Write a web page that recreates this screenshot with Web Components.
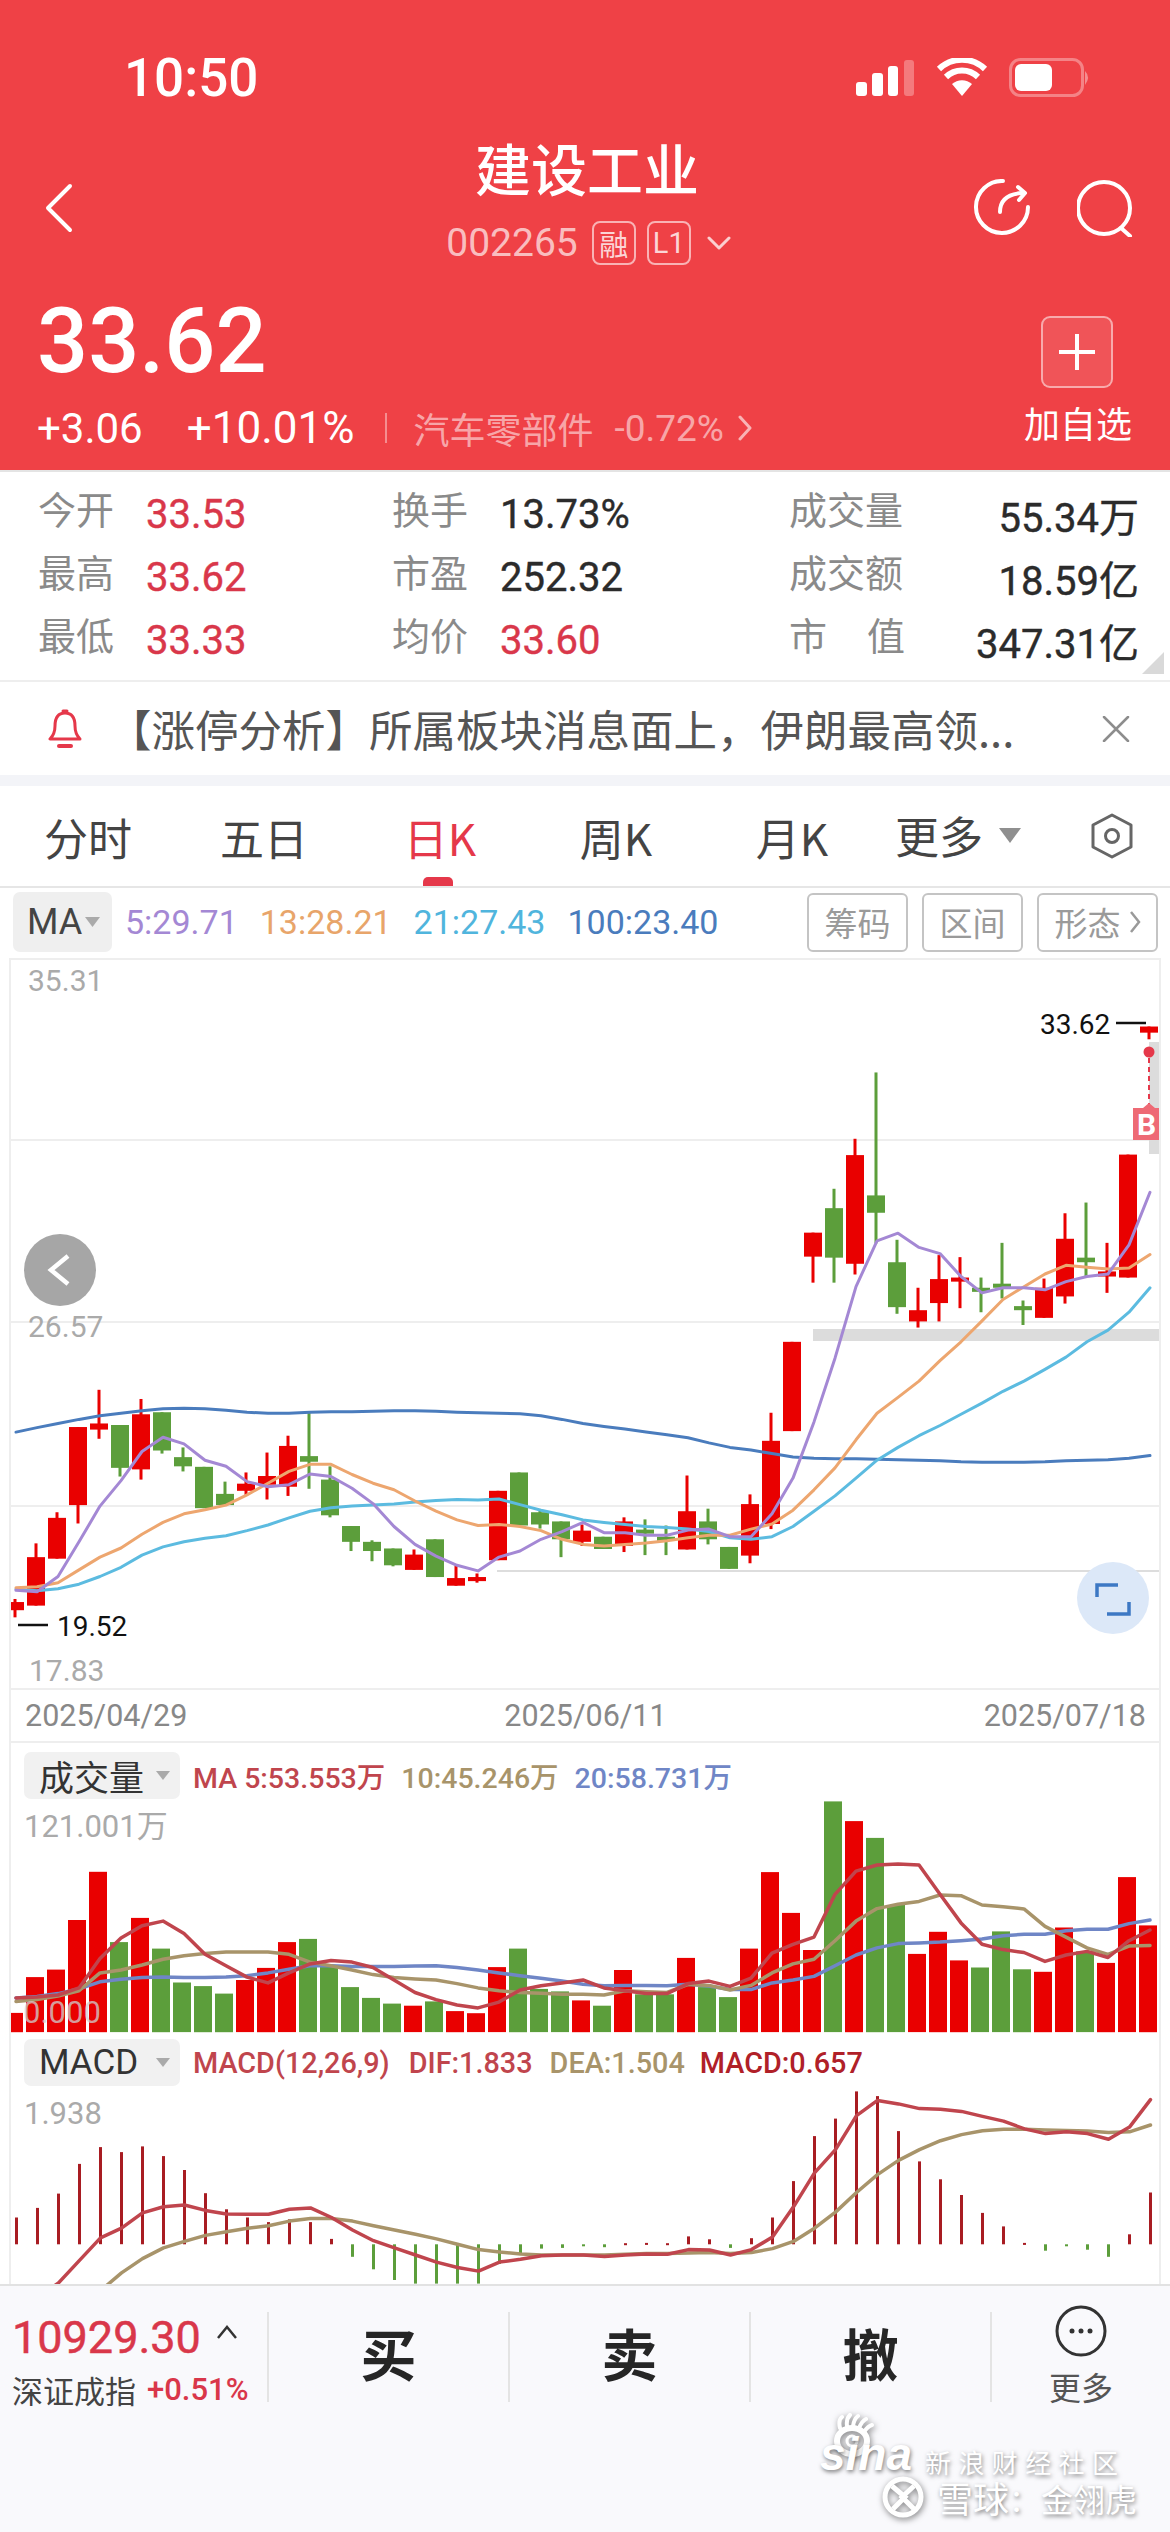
<!DOCTYPE html>
<html lang="zh-CN">
<head>
<meta charset="utf-8">
<title>建设工业</title>
<style>
  html, body { margin: 0; padding: 0; background: #fff; }
  body {
    width: 1170px;
    height: 2532px;
    overflow: hidden;
    display: flex;
    flex-direction: column;
    font-family: Roboto, "Noto Sans CJK SC", sans-serif;
  }
</style>
</head>
<body>
  <stock-header></stock-header>
  <stat-grid>
    <stat-cell label="今开" value="33.53" tone="up"></stat-cell>
    <stat-cell label="换手" value="13.73%"></stat-cell>
    <stat-cell label="成交量" value="55.34万" wide></stat-cell>
    <stat-cell label="最高" value="33.62" tone="up"></stat-cell>
    <stat-cell label="市盈" value="252.32"></stat-cell>
    <stat-cell label="成交额" value="18.59亿" wide></stat-cell>
    <stat-cell label="最低" value="33.33" tone="up"></stat-cell>
    <stat-cell label="均价" value="33.60" tone="up"></stat-cell>
    <stat-cell label="市值" value="347.31亿" wide></stat-cell>
  </stat-grid>
  <news-bar>【涨停分析】所属板块消息面上，伊朗最高领...</news-bar>
  <period-tabs>
    <period-tab>分时</period-tab>
    <period-tab>五日</period-tab>
    <period-tab active>日K</period-tab>
    <period-tab>周K</period-tab>
    <period-tab>月K</period-tab>
  </period-tabs>
  <ma-bar></ma-bar>
  <kline-chart></kline-chart>
  <volume-panel></volume-panel>
  <macd-panel></macd-panel>
  <trade-bar></trade-bar>

<script>
// chart data is read off the screenshot, one value per trading day
const RED = "#e90000";
const GREEN = "#5c9e3b";
const kY = (z) => 950 + z / 1.96;
const subY = (z) => 1730 + z / 2.8;

const polyline = (vals, toY, base, color, width = 3) => {
    const pts = vals.map((v, i) => `${(base + 21 * i).toFixed(1)},${toY(v).toFixed(1)}`).join(" ");
    return `<polyline points="${pts}" fill="none" stroke="${color}" stroke-width="${width}" stroke-linejoin="round" stroke-linecap="round"/>`;
};

const CANDLES = [
    ["r",1272,1278,1294,1308],["r",1163,1190,1285,1285],["r",1102,1113,1193,1193],["r",935,935,1088,1124],
    ["r",862,928,940,958],["g",931,931,1015,1032],["r",880,910,1018,1038],["g",906,906,981,987],
    ["g",975,994,1012,1022],["g",1013,1013,1094,1094],["g",1042,1066,1088,1088],["r",1024,1046,1060,1068],
    ["r",985,1031,1048,1077],["r",952,972,1052,1070],["g",907,992,1003,1056],["g",1012,1038,1108,1112],
    ["g",1129,1129,1160,1178],["g",1157,1160,1178,1198],["g",1173,1173,1206,1208],["r",1175,1185,1215,1215],
    ["g",1155,1155,1229,1229],["r",1207,1231,1246,1246],["r",1222,1229,1237,1240],["r",1060,1060,1196,1196],
    ["g",1024,1024,1128,1128],["g",1097,1102,1126,1134],["g",1120,1120,1155,1190],["r",1126,1138,1160,1168],
    ["g",1150,1150,1174,1174],["r",1112,1120,1168,1180],["g",1116,1136,1144,1186],["g",1128,1150,1158,1186],
    ["r",1030,1100,1175,1175],["g",1095,1120,1155,1165],["g",1170,1170,1213,1213],["r",1067,1086,1187,1202],
    ["r",907,962,1125,1135],["r",768,768,943,943],["r",554,554,601,652],["g",468,506,603,652],
    ["r",370,402,615,636],["g",240,481,515,575],["g",568,612,700,713],["r",662,706,728,740],
    ["r",598,645,692,728],["r",602,642,650,702],["g",642,662,670,710],["g",574,654,662,683],
    ["g",687,698,706,735],["r",644,662,721,721],["r",516,566,679,693],["g",495,603,612,640],
    ["r",574,630,640,672],["r",401,401,642,642],["r",150,150,162,175]
];
const K_MA5 = [1255,1258,1228,1160,1090,1040,983,955,968,1000,1012,1042,1052,1048,1027,1032,1055,1085,1130,1165,1188,1206,1217,1190,1178,1155,1140,1122,1142,1142,1147,1147,1137,1135,1150,1150,1105,1035,925,800,660,570,555,583,595,640,672,662,662,666,650,640,635,578,475];
const K_MA13 = [1250,1248,1240,1215,1190,1172,1145,1122,1105,1097,1088,1068,1045,1022,1008,1008,1028,1045,1058,1080,1100,1117,1128,1126,1130,1138,1155,1165,1168,1165,1162,1158,1152,1147,1147,1135,1125,1098,1058,1015,960,908,877,845,805,768,727,685,660,635,618,622,625,623,597];
const K_MA21 = [1253,1256,1252,1243,1228,1210,1186,1170,1160,1153,1148,1138,1127,1113,1100,1093,1090,1088,1086,1082,1079,1077,1078,1076,1087,1098,1107,1117,1122,1126,1130,1132,1135,1140,1152,1155,1150,1130,1100,1070,1035,1000,975,952,932,910,888,865,845,822,798,768,745,710,662];
const K_MA100 = [945,936,928,920,913,908,903,899,898,899,902,906,908,908,906,905,905,904,903,903,904,906,907,908,909,913,920,928,934,939,945,950,956,966,975,980,987,994,996,997,997,998,999,1000,1001,1003,1004,1004,1004,1003,1001,1000,999,996,991];

const VOLUME = [
    ["r",792],["r",692],["r",671],["r",532],["r",397],["g",594],["r",526],["g",612],["g",707],["g",717],["g",738],
    ["r",700],["r",666],["r",594],["g",585],["g",660],["g",720],["g",750],["g",766],["r",772],["g",760],["r",787],
    ["r",793],["r",664],["g",612],["g",725],["g",732],["r",757],["g",772],["r",672],["g",740],["g",740],["r",638],
    ["g",720],["g",748],["r",612],["r",398],["r",512],["r",616],["g",200],["r",255],["g",302],["g",490],["r",627],
    ["r",565],["r",645],["g",665],["g",564],["g",670],["r",677],["r",553],["g",620],["r",652],["r",412],["r",547]
];
const V_MA5 = [750,748,742,722,640,582,548,535,570,628,660,692,708,680,655,645,650,665,700,735,755,770,778,762,728,716,708,700,722,730,738,738,710,703,718,695,625,600,580,460,395,378,375,378,460,540,600,615,623,648,630,620,637,590,560];
const V_MA10 = [760,755,745,730,680,672,658,642,632,626,622,622,622,628,650,660,672,685,693,697,700,710,722,730,735,737,740,740,742,730,733,735,712,715,728,715,680,655,642,590,535,500,488,480,462,464,490,495,501,550,580,610,628,605,603];
const V_MA20 = [750,746,738,725,705,698,693,692,693,693,692,688,680,670,660,660,662,662,662,661,660,665,672,680,688,695,703,712,716,715,715,716,712,717,727,727,708,700,690,660,630,610,598,596,594,590,585,576,572,572,562,558,558,542,532];

const MACD_BARS = [1365,1338,1298,1215,1168,1182,1166,1193,1232,1297,1342,1365,1378,1370,1378,1425,1475,1510,1540,1550,1550,1550,1550,1495,1470,1452,1450,1443,1448,1437,1436,1437,1418,1426,1450,1423,1365,1263,1137,1088,1012,1025,1123,1208,1258,1302,1352,1390,1436,1458,1442,1455,1475,1412,1295];
const DIF = [1640,1590,1548,1485,1422,1395,1352,1335,1330,1345,1355,1356,1356,1342,1338,1365,1400,1430,1450,1470,1490,1505,1515,1490,1482,1472,1470,1470,1474,1470,1467,1468,1455,1456,1470,1455,1420,1335,1240,1175,1080,1037,1047,1060,1062,1068,1082,1095,1117,1130,1125,1130,1146,1112,1035];
const DEA = [1800,1740,1680,1620,1570,1520,1480,1450,1432,1415,1405,1395,1388,1375,1368,1368,1375,1388,1400,1412,1425,1440,1455,1462,1467,1470,1470,1470,1470,1468,1466,1466,1464,1463,1466,1463,1452,1432,1395,1350,1295,1245,1205,1175,1150,1133,1122,1118,1118,1120,1121,1123,1127,1125,1106];

class StatusBar extends HTMLElement {
    constructor() {
        super();
        this.attachShadow({ mode: "open" }).innerHTML = `
            <style>
                :host {
                    display: flex;
                    justify-content: space-between;
                    align-items: center;
                    padding: 58px 79px 0 124px;
                    height: 40px;
                    color: #fff;
                }
                .time { font: 500 53px/40px Roboto, sans-serif; }
                svg { display: block; }
            </style>
            <span class="time">10:50</span>
            <svg width="235" height="40" viewBox="856 58 235 40">
                <g fill="#fff">
                    <rect x="856" y="82" width="11" height="14" rx="3"/>
                    <rect x="872" y="73" width="11" height="23" rx="3"/>
                    <rect x="888" y="66" width="10" height="30" rx="3"/>
                    <rect x="904" y="60" width="10" height="36" rx="3" opacity=".3"/>
                    <path d="M962 96 L952 84 A15 15 0 0 1 972 84 Z"/>
                </g>
                <g fill="none" stroke="#fff" stroke-width="6">
                    <path d="M946 77 A23 23 0 0 1 978 77"/>
                    <path d="M939 69 A33 33 0 0 1 985 69"/>
                </g>
                <rect x="1010.5" y="59.5" width="72" height="36" rx="10" fill="none" stroke="#fff" stroke-opacity=".35" stroke-width="3"/>
                <rect x="1015" y="64" width="37" height="27" rx="6" fill="#fff"/>
                <path d="M1085 71 Q1091 77 1085 85 Z" fill="#fff" fill-opacity=".4"/>
            </svg>
        `;
    }
}

class StockHeader extends HTMLElement {
    constructor() {
        super();
        this.attachShadow({ mode: "open" }).innerHTML = `
            <style>
                :host {
                    display: block;
                    height: 470px;
                    box-sizing: border-box;
                    background: #ef4146;
                    color: #fff;
                    font-family: Roboto, "Noto Sans CJK SC", sans-serif;
                }
                svg { display: block; }
                .nav {
                    display: grid;
                    grid-template-columns: 1fr auto 1fr;
                    align-items: center;
                    height: 135px;
                    padding: 38px 37px 0 45px;
                }
                .title { text-align: center; }
                .name { font-size: 56px; line-height: 60px; font-weight: 500; margin-left: -4px; }
                .code {
                    display: flex;
                    align-items: center;
                    height: 44px;
                    margin-top: 19px;
                    margin-left: -1px;
                    color: rgba(255, 255, 255, 0.68);
                    font-size: 39px;
                }
                .tag {
                    box-sizing: border-box;
                    display: flex;
                    align-items: center;
                    justify-content: center;
                    width: 44px;
                    height: 44px;
                    margin-left: 14px;
                    border: 2px solid rgba(255, 255, 255, 0.6);
                    border-radius: 8px;
                    font-size: 29px;
                    color: rgba(255, 255, 255, 0.8);
                }
                .tag + .tag { margin-left: 11px; }
                .actions { display: flex; justify-content: flex-end; gap: 47px; }
                .caret { margin-left: 16px; }
                .quote {
                    display: flex;
                    justify-content: space-between;
                    height: 197px;
                    padding: 23px 40px 0 37px;
                    box-sizing: border-box;
                }
                .price { font-size: 90px; line-height: 90px; font-weight: 500; margin-top: 3px; }
                .change {
                    display: flex;
                    align-items: center;
                    height: 44px;
                    margin-top: 19px;
                    font-size: 42px;
                }
                .pct { margin-left: 44px; font-size: 44px; }
                .rule { width: 2px; height: 30px; background: rgba(255, 255, 255, 0.4); margin: 0 26px 0 31px; }
                .sector { font-size: 36px; color: rgba(255, 255, 255, 0.55); display: flex; align-items: center; }
                .sector b { font-weight: 400; margin-left: 21px; font-size: 37px; }
                .sector svg { margin-left: 14px; }
                .add { display: flex; flex-direction: column; align-items: center; padding-top: 22px; width: 106px; }
                .plus {
                    box-sizing: border-box;
                    width: 72px;
                    height: 72px;
                    display: flex;
                    align-items: center;
                    justify-content: center;
                    border: 2px solid rgba(255, 255, 255, 0.5);
                    border-radius: 9px;
                    background: rgba(255, 255, 255, 0.1);
                }
                .add span { font-size: 36px; line-height: 44px; margin-top: 16px; margin-left: 2px; white-space: nowrap; }
            </style>
            <status-bar></status-bar>
            <div class="nav">
                <svg width="28" height="50" viewBox="0 0 28 50" fill="none" stroke="#fff" stroke-width="4" stroke-linecap="round" stroke-linejoin="round" style="margin-top:8px">
                    <path d="M25 3 L3 25 L25 47"/>
                </svg>
                <div class="title">
                    <div class="name">建设工业</div>
                    <div class="code">
                        <span>002265</span>
                        <span class="tag">融</span>
                        <span class="tag">L1</span>
                        <svg class="caret" width="24" height="16" viewBox="0 0 24 16" fill="none" stroke="rgba(255,255,255,.75)" stroke-width="3" stroke-linecap="round" stroke-linejoin="round">
                            <path d="M2 3 L12 13 L22 3"/>
                        </svg>
                    </div>
                </div>
                <div class="actions" style="margin-top:8px">
                    <svg width="56" height="58" viewBox="974 178 56 58" fill="none" stroke="#fff" stroke-width="4" stroke-linecap="round" stroke-linejoin="round">
                        <path d="M1003 180 A26 26 0 1 0 1028 206"/>
                        <path d="M1000 211 C1000 200 1006 193 1022 192"/>
                        <path d="M1018 186 L1025 192 L1019 199"/>
                    </svg>
                    <svg width="56" height="58" viewBox="1077 178 56 58" fill="none" stroke="#fff" stroke-width="4" stroke-linecap="round">
                        <circle cx="1104" cy="207" r="26"/>
                        <path d="M1121 227 L1130 235"/>
                    </svg>
                </div>
            </div>
            <div class="quote">
                <div>
                    <div class="price">33.62</div>
                    <div class="change">
                        <span>+3.06</span>
                        <span class="pct">+10.01%</span>
                        <span class="rule"></span>
                        <span class="sector">汽车零部件<b>-0.72%</b>
                            <svg width="14" height="28" viewBox="0 0 14 28" fill="none" stroke="rgba(255,255,255,.6)" stroke-width="3" stroke-linecap="round" stroke-linejoin="round"><path d="M2 3 L12 14 L2 25"/></svg>
                        </span>
                    </div>
                </div>
                <div class="add">
                    <div class="plus">
                        <svg width="36" height="36" viewBox="0 0 36 36" stroke="#fff" stroke-width="4"><path d="M18 0 V36 M0 18 H36"/></svg>
                    </div>
                    <span>加自选</span>
                </div>
            </div>
        `;
    }
}

class StatGrid extends HTMLElement {
    constructor() {
        super();
        this.attachShadow({ mode: "open" }).innerHTML = `
            <style>
                :host {
                    display: grid;
                    grid-template-columns: 354px 397px 350px;
                    grid-auto-rows: 63px;
                    position: relative;
                    height: 212px;
                    box-sizing: border-box;
                    padding: 11px 0 0 38px;
                    border-top: 2px solid #e4e4e4;
                    border-bottom: 2px solid #eeeeee;
                }
                .corner {
                    position: absolute;
                    right: 6px;
                    bottom: 6px;
                    width: 0;
                    height: 0;
                    border-left: 22px solid transparent;
                    border-bottom: 22px solid #d9d9d9;
                }
            </style>
            <slot></slot>
            <span class="corner"></span>
        `;
    }
}

class StatCell extends HTMLElement {
    constructor() {
        super();
        this.attachShadow({ mode: "open" });
    }

    connectedCallback() {
        const wide = this.hasAttribute("wide");
        const up = this.getAttribute("tone") === "up";
        const label = this.getAttribute("label");
        // 市值 is spaced out to the width of the three character labels
        const labelHtml = label.length === 2 && wide
            ? `<span class="label spread"><i>${label[0]}</i><i>${label[1]}</i></span>`
            : `<span class="label">${label}</span>`;
        this.shadowRoot.innerHTML = `
            <style>
                :host {
                    display: flex;
                    align-items: center;
                    justify-content: ${wide ? "space-between" : "flex-start"};
                    font-family: Roboto, "Noto Sans CJK SC", sans-serif;
                }
                .label { width: ${wide ? 116 : 108}px; font-size: 38px; line-height: 46px; margin-bottom: 7px; color: #8a8a8a; white-space: nowrap; }
                .spread { display: flex; justify-content: space-between; }
                .spread i { font-style: normal; }
                .value { font-size: 40px; font-weight: 400; -webkit-text-stroke: 0.4px currentColor; color: ${up ? "#d9374a" : "#2b2b2b"}; white-space: nowrap; }
            </style>
            ${labelHtml}
            <span class="value">${this.getAttribute("value")}</span>
        `;
    }
}

class NewsBar extends HTMLElement {
    constructor() {
        super();
        this.attachShadow({ mode: "open" }).innerHTML = `
            <style>
                :host {
                    display: flex;
                    align-items: center;
                    box-sizing: border-box;
                    padding-left: 48px;
                    border-bottom: 11px solid #f3f4f8;
                    height: 104px;
                    color: #555;
                    font: 43.5px "Noto Sans CJK SC", sans-serif;
                }
                .text { flex: 1; margin-left: 26px; white-space: nowrap; line-height: 60px; }
                .close { margin-right: 40px; }
            </style>
            <svg width="34" height="42" viewBox="0 0 34 42" fill="none" stroke="#e5384a" stroke-width="3" stroke-linejoin="round" stroke-linecap="round">
                <path d="M17 5 C9 5 7 11 7 18 C7 24 5 28 2 31 H32 C29 28 27 24 27 18 C27 11 25 5 17 5 Z"/>
                <path d="M15 3 H19"/>
                <path d="M11 38 H23" stroke-width="4"/>
            </svg>
            <span class="text"><slot></slot></span>
            <svg class="close" width="28" height="26" viewBox="0 0 28 26" stroke="#8d8d8d" stroke-width="2.5" stroke-linecap="round">
                <path d="M2 1 L26 25 M26 1 L2 25"/>
            </svg>
        `;
    }
}

class PeriodTab extends HTMLElement {
    constructor() {
        super();
        this.attachShadow({ mode: "open" }).innerHTML = `
            <style>
                :host {
                    display: block;
                    position: relative;
                    height: 100px;
                    box-sizing: border-box;
                    padding-top: 21px;
                    text-align: center;
                    font: 44px/60px "Noto Sans CJK SC", sans-serif;
                    color: #444;
                }
                :host([active]) { color: #e5384a; }
                :host([active])::after {
                    content: "";
                    position: absolute;
                    left: 71px;
                    bottom: 0;
                    width: 30px;
                    height: 9px;
                    border-radius: 5px 5px 0 0;
                    background: #e5384a;
                }
            </style>
            <slot></slot>
        `;
    }
}

class PeriodTabs extends HTMLElement {
    constructor() {
        super();
        this.attachShadow({ mode: "open" }).innerHTML = `
            <style>
                :host {
                    display: grid;
                    grid-template-columns: repeat(5, 176px) 156px 1fr;
                    height: 102px;
                    box-sizing: border-box;
                    border-bottom: 2px solid #e6e6e6;
                    font: 44px/60px "Noto Sans CJK SC", sans-serif;
                    color: #444;
                }
                .more { display: flex; align-items: center; justify-content: center; height: 102px; margin-top: -2px; gap: 16px; }
                .gear { display: flex; align-items: center; justify-content: center; height: 100px; margin-left: 18px; }
            </style>
            <slot></slot>
            <div class="more">
                <span>更多</span>
                <svg width="22" height="15" viewBox="0 0 22 15"><path d="M0 0 H22 L11 15 Z" fill="#8f8f8f"/></svg>
            </div>
            <div class="gear">
                <svg width="44" height="46" viewBox="0 0 44 46" fill="none" stroke="#666" stroke-width="3" stroke-linejoin="round">
                    <path d="M22 2 L41 12 V34 L22 44 L3 34 V12 Z"/>
                    <circle cx="22" cy="23" r="6.5"/>
                </svg>
            </div>
        `;
    }
}

class MaBar extends HTMLElement {
    constructor() {
        super();
        this.attachShadow({ mode: "open" }).innerHTML = `
            <style>
                :host {
                    display: flex;
                    align-items: center;
                    height: 70px;
                    box-sizing: border-box;
                    padding: 3px 12px 5px 13px;
                    font: 34px Roboto, "Noto Sans CJK SC", sans-serif;
                }
                .pill {
                    box-sizing: border-box;
                    display: flex;
                    align-items: center;
                    width: 99px;
                    height: 60px;
                    padding-left: 14px;
                    gap: 3px;
                    border-radius: 7px;
                    background: #efefef;
                    color: #444;
                    font-size: 36px;
                }
                .legend { margin-left: 13px; white-space: nowrap; }
                .legend + .legend { margin-left: 22px; }
                .actions { display: flex; gap: 14px; margin-left: auto; }
                .btn {
                    box-sizing: border-box;
                    display: flex;
                    align-items: center;
                    justify-content: center;
                    gap: 8px;
                    width: 101px;
                    height: 59px;
                    border: 2px solid #c4c4c4;
                    border-radius: 6px;
                    color: #9a9a9a;
                    font-size: 33px;
                }
                .btn.wide { width: 121px; }
            </style>
            <span class="pill">MA<svg width="15" height="10" viewBox="0 0 15 10"><path d="M0 0 H15 L7.5 10 Z" fill="#aaa"/></svg></span>
            <span class="legend" style="color:#a488d4">5:29.71</span>
            <span class="legend" style="color:#e8a56a">13:28.21</span>
            <span class="legend" style="color:#50b5dd">21:27.43</span>
            <span class="legend" style="color:#4a7cbd">100:23.40</span>
            <div class="actions">
                <span class="btn">筹码</span>
                <span class="btn">区间</span>
                <span class="btn wide">形态<svg width="12" height="24" viewBox="0 0 12 24" fill="none" stroke="#9a9a9a" stroke-width="2.5"><path d="M2 2 L10 12 L2 22"/></svg></span>
            </div>
        `;
    }
}

class KlineChart extends HTMLElement {
    constructor() {
        super();
        const grid = [1140, 1322, 1506].map((y) => `<line x1="11" x2="1159" y1="${y}" y2="${y}" stroke="#eeeeee" stroke-width="2"/>`).join("");
        const candles = CANDLES.map(([c, wt, bt, bb, wb], i) => {
            const x = 15 + 21 * i;
            const fill = c === "r" ? RED : GREEN;
            return `<rect x="${x - 1.5}" y="${kY(wt)}" width="3" height="${kY(wb) - kY(wt)}" fill="${fill}"/>` +
                `<rect x="${x - 9}" y="${kY(bt)}" width="18" height="${Math.max(kY(bb) - kY(bt), 3)}" fill="${fill}"/>`;
        }).join("");
        this.attachShadow({ mode: "open" }).innerHTML = `
            <style>
                :host {
                    display: block;
                    box-sizing: border-box;
                    width: 1152px;
                    margin-left: 9px;
                    border: 2px solid #eeeeee;
                    border-width: 2px 2px 0;
                    font-family: Roboto, "Noto Sans CJK SC", sans-serif;
                }
                svg { display: block; }
                text { font-family: Roboto, sans-serif; }
                .axis { font-size: 30px; fill: #aaaaaa; }
                .mark { font-size: 28px; fill: #111; }
                .dates {
                    display: flex;
                    justify-content: space-between;
                    align-items: center;
                    height: 51px;
                    padding: 0 13px 0 14px;
                    border-top: 2px solid #eeeeee;
                    border-bottom: 2px solid #eeeeee;
                    font-size: 30.5px;
                    color: #888;
                }
            </style>
            <svg width="1148" height="728" viewBox="11 960 1148 728">
                ${grid}
                <line x1="497" x2="1159" y1="1571" y2="1571" stroke="#dddddd" stroke-width="2"/>
                <rect x="813" y="1329" width="347" height="12" fill="#dcdcdc"/>
                <rect x="1149" y="1042" width="11" height="112" fill="#dcdcdc"/>
                ${candles}
                ${polyline(K_MA100, kY, 16, "#4a7cbd")}
                ${polyline(K_MA21, kY, 16, "#5cbbe0")}
                ${polyline(K_MA13, kY, 16, "#eda66f")}
                ${polyline(K_MA5, kY, 16, "#a488d4")}
                <text class="axis" x="28" y="991">35.31</text>
                <text class="axis" x="28" y="1337">26.57</text>
                <text class="axis" x="29" y="1681">17.83</text>
                <path d="M18 1625 H48" stroke="#111" stroke-width="2.5"/>
                <text class="mark" x="57" y="1636">19.52</text>
                <text class="mark" x="1040" y="1034">33.62</text>
                <path d="M1116 1023 H1146" stroke="#111" stroke-width="2.5"/>
                <ellipse cx="1149" cy="1052" rx="5.5" ry="5.5" fill="#e5384a"/>
                <path d="M1149 1058 V1104" stroke="#e5384a" stroke-width="2" stroke-dasharray="5 4"/>
                <path d="M1133 1108 H1143 L1149 1103 L1155 1108 H1160 V1140 H1133 Z" fill="#ee6a75"/>
                <text x="1146.5" y="1135" text-anchor="middle" font-size="30" font-weight="700" fill="#fff">B</text>
                <circle cx="60" cy="1270" r="36" fill="#a6a6a6"/>
                <path d="M68 1256 L51 1270 L68 1284" fill="none" stroke="#fff" stroke-width="4.5"/>
                <circle cx="1113" cy="1598" r="36" fill="#dce8f8"/>
                <path d="M1097 1597 V1585 H1118 M1129 1602 V1614 H1107" fill="none" stroke="#3d78c4" stroke-width="3.5"/>
            </svg>
            <div class="dates">
                <span>2025/04/29</span>
                <span>2025/06/11</span>
                <span>2025/07/18</span>
            </div>
        `;
    }
}

// the grey label with a little drop arrow on top of the two lower panels
class PanelPill extends HTMLElement {
    constructor() {
        super();
        this.attachShadow({ mode: "open" }).innerHTML = `
            <style>
                :host {
                    box-sizing: border-box;
                    display: inline-flex;
                    align-items: center;
                    justify-content: space-between;
                    width: 156px;
                    height: 47px;
                    padding: 0 10px 0 15px;
                    border-radius: 7px;
                    background: #f1f1f1;
                    color: #333;
                    font: 35px Roboto, "Noto Sans CJK SC", sans-serif;
                    flex: none;
                }
            </style>
            <slot></slot>
            <svg width="14" height="9" viewBox="0 0 14 9"><path d="M0 0 H14 L7 9 Z" fill="#aaa"/></svg>
        `;
    }
}

class VolumePanel extends HTMLElement {
    constructor() {
        super();
        const bars = VOLUME.map(([c, top], i) => {
            const x = 14 + 21 * i;
            return `<rect x="${x - 9}" y="${subY(top).toFixed(1)}" width="18" height="${(subY(846) - subY(top)).toFixed(1)}" fill="${c === "r" ? RED : GREEN}"/>`;
        }).join("");
        this.attachShadow({ mode: "open" }).innerHTML = `
            <style>
                :host {
                    display: block;
                    box-sizing: border-box;
                    width: 1152px;
                    margin-left: 9px;
                    border: 2px solid #eeeeee;
                    border-width: 0 2px;
                    font-family: Roboto, "Noto Sans CJK SC", sans-serif;
                }
                .head { display: flex; align-items: center; height: 57px; padding-left: 13px; box-sizing: border-box; padding-top: 7px; font-size: 28.5px; white-space: nowrap; }
                .head span { font-weight: 500; }
                .head panel-pill { margin-right: 13px; }
                .head span + span { margin-left: 16px; }
                svg { display: block; }
                text { font-family: Roboto, "Noto Sans CJK SC", sans-serif; }
            </style>
            <div class="head">
                <panel-pill>成交量</panel-pill>
                <span style="color:#c0454d">MA 5:53.553万</span>
                <span style="color:#a8946a">10:45.246万</span>
                <span style="color:#6f86c6">20:58.731万</span>
            </div>
            <svg width="1148" height="233" viewBox="11 1800 1148 233">
                ${bars}
                ${polyline(V_MA20, subY, 16, "#6f86c6", 3.5)}
                ${polyline(V_MA10, subY, 16, "#a8946a", 3.5)}
                ${polyline(V_MA5, subY, 16, "#c0454d", 3.5)}
                <text x="24" y="1837" font-size="31" fill="#aaaaaa">121.001万</text>
                <text x="23" y="2023" font-size="31" fill="#cfcfcf" fill-opacity=".75">0.000</text>
            </svg>
        `;
    }
}

class MacdPanel extends HTMLElement {
    constructor() {
        super();
        const zero = subY(1440);
        const bars = MACD_BARS.map((z, i) => {
            const x = 15 + 21 * i;
            const y = subY(z);
            const up = z < 1440;
            return `<rect x="${x}" y="${(up ? y : zero).toFixed(1)}" width="3" height="${Math.max(Math.abs(y - zero), 2).toFixed(1)}" fill="${up ? "#a81c22" : GREEN}"/>`;
        }).join("");
        this.attachShadow({ mode: "open" }).innerHTML = `
            <style>
                :host {
                    display: block;
                    box-sizing: border-box;
                    width: 1152px;
                    margin-left: 9px;
                    border: 2px solid #eeeeee;
                    border-width: 0 2px;
                    font-family: Roboto, "Noto Sans CJK SC", sans-serif;
                }
                .head { display: flex; align-items: center; height: 55px; padding-left: 13px; box-sizing: border-box; padding-top: 4px; font-size: 28.8px; white-space: nowrap; font-weight: 500; }
                .head panel-pill { margin-right: 13px; }
                .head span + span { margin-left: 19px; }
                svg { display: block; }
                text { font-family: Roboto, sans-serif; }
            </style>
            <div class="head">
                <panel-pill>MACD</panel-pill>
                <span style="color:#c0454d">MACD(12,26,9)</span>
                <span style="color:#c0454d">DIF:1.833</span>
                <span style="color:#a8946a;margin-left:17px">DEA:1.504</span>
                <span style="color:#b02028;margin-left:15px">MACD:0.657</span>
            </div>
            <svg width="1148" height="196" viewBox="11 2088 1148 196">
                ${bars}
                ${polyline(DEA, subY, 16.5, "#a8946a", 3.5)}
                ${polyline(DIF, subY, 16.5, "#c0454d", 3.5)}
                <text x="24" y="2124" font-size="31" fill="#aaaaaa">1.938</text>
            </svg>
        `;
    }
}

class TradeBar extends HTMLElement {
    constructor() {
        super();
        this.attachShadow({ mode: "open" }).innerHTML = `
            <style>
                :host {
                    display: block;
                    position: relative;
                    flex: 1;
                    box-sizing: border-box;
                    padding-top: 26px;
                    border-top: 2px solid #e2e2e2;
                    background: #f9f9fc;
                    font-family: Roboto, "Noto Sans CJK SC", sans-serif;
                }
                .row { display: flex; height: 90px; }
                .index { width: 269px; box-sizing: border-box; padding: 3px 0 0 12px; border-right: 2px solid #e4e4e4; }
                .last { display: flex; align-items: flex-start; font-size: 45px; line-height: 46px; font-weight: 400; -webkit-text-stroke: 0.5px currentColor; color: #d9374a; }
                .last svg { margin: 10px 0 0 15px; }
                .sub { display: flex; align-items: center; height: 36px; margin-top: 10px; font-size: 31px; color: #444; white-space: nowrap; }
                .sub b { font-weight: 500; color: #d9374a; margin-left: 11px; font-size: 31px; }
                .act {
                    width: 241px;
                    box-sizing: border-box;
                    display: flex;
                    align-items: center;
                    justify-content: center;
                    padding-bottom: 12px;
                    border-right: 2px solid #e4e4e4;
                    font-size: 56px;
                    font-weight: 700;
                    color: #262626;
                }
                .more {
                    flex: 1;
                    display: flex;
                    flex-direction: column;
                    align-items: center;
                    justify-content: center;
                    gap: 15px;
                    padding-bottom: 4px;
                    font-size: 32px;
                    color: #555;
                    line-height: 34px;
                }
                .more svg { flex: none; }
                .mark { position: absolute; left: 815px; top: 127px; color: #fff; }
                .mark svg { display: block; }
                .mark-text {
                    position: absolute;
                    white-space: nowrap;
                    text-shadow: 1px 2px 4px rgba(0, 0, 0, 0.5);
                    font-family: Roboto, "Noto Sans CJK SC", sans-serif;
                    color: #fff;
                }
            </style>
            <div class="row">
                <div class="index">
                    <div class="last">10929.30
                        <svg width="22" height="14" viewBox="0 0 22 14" fill="none" stroke="#333" stroke-width="2.5"><path d="M2 13 L11 2 L20 13"/></svg>
                    </div>
                    <div class="sub">深证成指<b>+0.51%</b></div>
                </div>
                <div class="act">买</div>
                <div class="act">卖</div>
                <div class="act">撤</div>
                <div class="more">
                    <svg width="52" height="52" viewBox="0 0 52 52" fill="none" stroke="#333" stroke-width="3">
                        <circle cx="26" cy="26" r="24"/>
                        <g fill="#333" stroke="none"><circle cx="17" cy="26" r="2.5"/><circle cx="26" cy="26" r="2.5"/><circle cx="35" cy="26" r="2.5"/></g>
                    </svg>
                    <span>更多</span>
                </div>
            </div>
            <div class="mark">
                <svg width="130" height="105" viewBox="815 2413 130 105" style="filter:drop-shadow(1px 2px 3px rgba(0,0,0,.5))">
                    <g fill="none" stroke="#fff">
                        <ellipse cx="852" cy="2441" rx="15" ry="13" stroke-width="6"/>
                        <circle cx="852" cy="2441" r="5" stroke-width="3"/>
                        <path d="M840 2428 Q838 2420 842 2417 M847 2426 Q846 2419 850 2415 M853 2426 Q854 2419 858 2416 M859 2428 Q862 2421 866 2419 M864 2432 Q868 2426 872 2425" stroke-width="4" stroke-linecap="round"/>
                        <circle cx="903" cy="2497" r="18" stroke-width="5"/>
                        <path d="M892 2486 L905 2497 L893 2509 M914 2486 L902 2497 L914 2509" stroke-width="5"/>
                    </g>
                </svg>
                <span class="mark-text" style="left:5px;top:18px;font:italic 700 46px/46px 'Liberation Sans',sans-serif;">sina</span>
                <span class="mark-text" style="left:110px;top:36px;font-size:26px;line-height:30px;letter-spacing:7.4px;">新浪财经社区</span>
                <span class="mark-text" style="left:122px;top:70px;font-size:36px;line-height:36px;">雪球</span>
                <span class="mark-text" style="left:194px;top:70px;font-size:30px;line-height:36px;">：</span>
                <span class="mark-text" style="left:226px;top:70px;font-size:32px;line-height:36px;">金翎虎</span>
            </div>
        `;
    }
}

customElements.define("status-bar", StatusBar);
customElements.define("stock-header", StockHeader);
customElements.define("stat-grid", StatGrid);
customElements.define("stat-cell", StatCell);
customElements.define("news-bar", NewsBar);
customElements.define("period-tab", PeriodTab);
customElements.define("period-tabs", PeriodTabs);
customElements.define("ma-bar", MaBar);
customElements.define("kline-chart", KlineChart);
customElements.define("panel-pill", PanelPill);
customElements.define("volume-panel", VolumePanel);
customElements.define("macd-panel", MacdPanel);
customElements.define("trade-bar", TradeBar);
</script>
</body>
</html>
